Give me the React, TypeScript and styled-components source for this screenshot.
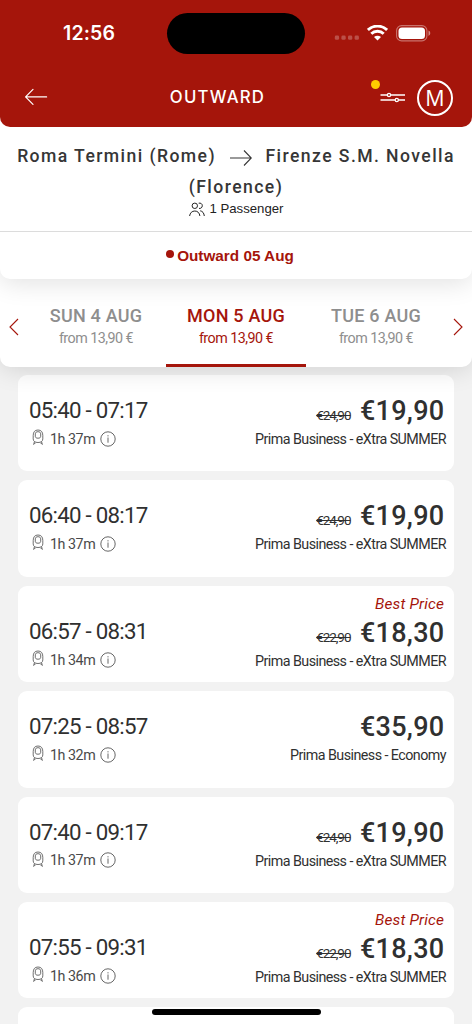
import React from 'react';
import styled, { createGlobalStyle } from 'styled-components';

const GlobalStyle = createGlobalStyle`
  *, *::before, *::after { box-sizing: border-box; }
  body { margin: 0; background: #f2f2f2; color: #303030; font-family: Roboto, sans-serif; }
  button { border: 0; background: none; padding: 0; margin: 0; color: inherit; font: inherit; }
  svg { display: block; flex: none; }
`;

const RED = '#a5150b';

const Screen = styled.main`
  width: 472px;
  height: 1024px;
  overflow: hidden;
  position: relative;
  background: #f2f2f2;
  display: flex;
  flex-direction: column;
`;

const Header = styled.header`
  position: relative;
  z-index: 4;
  flex: none;
  height: 279px;
  background: #fff;
  border-radius: 0 0 10px 10px;
  box-shadow: 0 4px 26px rgba(0, 0, 0, 0.12);
`;

const TopBar = styled.div`
  height: 126.5px;
  border-radius: 0 0 10px 10px;
  background: ${RED};
  color: #fff;
`;

const StatusBar = styled.div`
  height: 66px;
  display: grid;
  grid-template-columns: 167px 138px 1fr;
  align-items: center;
`;

const Clock = styled.span`
  padding-left: 63px;
  font: 600 19.5px/24px Inter, sans-serif;
  letter-spacing: 0.15px;
`;

const Island = styled.div`
  height: 41px;
  border-radius: 21px;
  background: #000;
`;

const StatusIcons = styled.div`
  display: flex;
  align-items: center;
  padding-left: 29px;
  gap: 8px;
`;

const Navigation = styled.nav`
  height: 60.5px;
  display: grid;
  grid-template-columns: 71px 1fr 109px;
  align-items: center;
`;

const BackButton = styled.button`
  padding: 1px 0 0 24px;
`;

const Title = styled.h1`
  margin: 0 19px 0 20px;
  padding-top: 1px;
  text-align: center;
  font: 500 16.8px/22px Inter, sans-serif;
  letter-spacing: 1.2px;
`;

const Actions = styled.div`
  display: flex;
  align-items: center;
  padding: 3px 0 0 17px;
  gap: 11px;
`;

const FilterButton = styled.button`
  position: relative;
`;

const FilterDot = styled.i`
  position: absolute;
  left: -9px;
  top: -2.5px;
  width: 9px;
  height: 9px;
  border-radius: 50%;
  background: #fc0;
`;

const Avatar = styled.button`
  width: 36px;
  height: 36px;
  border: 2px solid #fff;
  border-radius: 50%;
  font: 400 21.5px/32px "Open Sans", sans-serif;
  text-align: center;
`;

const Route = styled.div`
  height: 105.5px;
  border-bottom: 1px solid #dcdcdc;
  padding-top: 14px;
  display: flex;
  flex-direction: column;
  align-items: center;
`;

const Stations = styled.div`
  display: flex;
  align-items: center;
  height: 31px;
  white-space: pre;
  font: 500 17.6px/31px Roboto, sans-serif;
  letter-spacing: 1.42px;
  color: #363636;
`;

const StationArrow = styled.svg`
  margin: 3px 14px 0 13.5px;
`;

const Passengers = styled.div`
  height: 16px;
  margin-top: -1.5px;
  display: flex;
  align-items: center;
  gap: 4px;
  padding-left: 1px;
  color: #222;
  font: 400 13.2px/16px "Liberation Sans", sans-serif;
`;

const Direction = styled.div`
  height: 47px;
  display: flex;
  align-items: center;
  justify-content: center;
  gap: 3px;
  padding: 1px 12px 0 0;
  color: ${RED};
  font: 700 15.3px/20px "Liberation Sans", sans-serif;
`;

const DirectionDot = styled.i`
  width: 8px;
  height: 8px;
  margin-bottom: 5px;
  border-radius: 50%;
  background: ${RED};
`;

const DateBar = styled.div`
  position: relative;
  z-index: 2;
  flex: none;
  height: 99px;
  margin-top: -11px;
  padding-top: 12px;
  display: grid;
  grid-template-columns: 26px 140px 140px 140px 26px;
  background: #fff;
  border-radius: 0 0 10px 10px;
  box-shadow: 0 2px 26px rgba(0, 0, 0, 0.14);
`;

const DateArrow = styled.button<{ $right?: boolean }>`
  display: flex;
  align-items: center;
  justify-content: ${(p) => (p.$right ? 'flex-start' : 'flex-end')};
  padding: ${(p) => (p.$right ? '7px 0 0 7px' : '7px 7px 0 0')};
`;

const DateTab = styled.button<{ $active?: boolean }>`
  display: flex;
  flex-direction: column;
  align-items: center;
  padding-top: 25px;
  color: ${(p) => (p.$active ? RED : '#8e8e8e')};
  border-bottom: 3px solid ${(p) => (p.$active ? RED : 'transparent')};
`;

const DayName = styled.span`
  font: 500 18px/22px Roboto, sans-serif;
  letter-spacing: 0.22px;
`;

const DayPrice = styled.span`
  font: 400 14.3px/22px Roboto, sans-serif;
  letter-spacing: -0.52px;
`;

const TripList = styled.section`
  display: flex;
  flex-direction: column;
  gap: 9px;
  padding: 8px 18px 0;
`;

const TripCard = styled.article<{ $best: boolean }>`
  flex: none;
  height: 96.4px;
  display: flex;
  justify-content: space-between;
  background: #fff;
  border-radius: 9px;
  padding: ${(p) => (p.$best ? '8px' : '20px')} 8px 0 11px;
`;

const TripTiming = styled.div<{ $best: boolean }>`
  padding-top: ${(p) => (p.$best ? '22.5px' : '0')};
`;

const TripHours = styled.div`
  font: 400 22.3px/30px Roboto, sans-serif;
  letter-spacing: -0.75px;
`;

const Duration = styled.div`
  height: 27px;
  display: flex;
  align-items: center;
  padding-left: 2.5px;
  color: #4a4a4a;
  font: 400 14.3px/27px Roboto, sans-serif;
  letter-spacing: -0.48px;
`;

const DurationText = styled.span`
  margin: 1px 5px 0 6.5px;
`;

const Fare = styled.div`
  display: flex;
  flex-direction: column;
  align-items: flex-end;
`;

const BestPrice = styled.div`
  height: 20px;
  padding-right: 2px;
  color: ${RED};
  font: italic 400 15.4px/20px Roboto, sans-serif;
  letter-spacing: 0.15px;
`;

const PriceLine = styled.div<{ $best: boolean }>`
  height: 31px;
  display: flex;
  align-items: baseline;
  gap: 9.5px;
  padding: 1px 1.5px 0 0;
  margin-top: ${(p) => (p.$best ? '3px' : '0')};
`;

const OldPrice = styled.s`
  font: 400 13.5px/31px Roboto, sans-serif;
  letter-spacing: -1.05px;
`;

const Price = styled.strong`
  font: 500 27px/31px Roboto, sans-serif;
  letter-spacing: 0.3px;
`;

const FareName = styled.div`
  font: 400 14.3px/26px Roboto, sans-serif;
  letter-spacing: -0.55px;
  white-space: nowrap;
`;

const HomeIndicator = styled.div`
  position: absolute;
  z-index: 5;
  left: 152px;
  bottom: 9px;
  width: 169px;
  height: 6px;
  border-radius: 3px;
  background: #000;
`;

const Signals = () => (
  <svg width="25" height="20" viewBox="0 0 25 20" fill="#fff" opacity=".25">
    {[0.8, 7.4, 14, 20.6].map((x) => (
      <rect key={x} x={x} y="12.5" width="4.3" height="4.3" rx="1.4" />
    ))}
  </svg>
);

const Wifi = () => (
  <svg width="21" height="16" viewBox="0 0 21 16" fill="none" stroke="#fff" strokeWidth="2.9">
    <path d="M.9 5a13.8 13.8 0 0 1 19.2 0M4.3 8.8a8.9 8.9 0 0 1 12.4 0" />
    <path d="m10.5 15.6-3.5-3.5a4.9 4.9 0 0 1 7 0z" fill="#fff" stroke="none" />
  </svg>
);

const Battery = () => (
  <svg width="35" height="17" viewBox="0 0 35 17">
    <rect x=".6" y=".6" width="30.3" height="15.3" rx="5" fill="none" stroke="#fff" strokeOpacity=".4" strokeWidth="1.1" />
    <rect x="2.5" y="2.5" width="26.5" height="11.5" rx="3.5" fill="#fff" />
    <path d="M32.5 5.6c2.3 1 2.3 4.3 0 5.3z" fill="#fff" opacity=".5" />
  </svg>
);

const BackIcon = () => (
  <svg width="24" height="18" viewBox="0 0 24 18" fill="none" stroke="#fff" strokeWidth="1.2" strokeLinecap="round" strokeLinejoin="round">
    <path d="M9 1.4 1.6 8.9 9 16.4M1.6 8.9h21" />
  </svg>
);

const FilterIcon = () => (
  <svg width="26" height="30" viewBox="0 0 26 30" fill={RED} stroke="#fff" strokeWidth="1.3">
    <path d="M.5 12h24.5M.5 17h24.5" />
    <circle cx="9" cy="12" r="1.6" />
    <circle cx="16.8" cy="17" r="1.6" />
  </svg>
);

const PeopleIcon = () => (
  <svg width="16" height="15" viewBox="0 0 16 15" fill="none" stroke="#222" strokeWidth="1">
    <circle cx="5.8" cy="3.8" r="2.7" />
    <path d="M.6 14c.4-3.1 2.4-5 5.2-5s4.7 1.9 5.1 5M9.7 1.2c2-.5 3.6.7 3.6 2.5S11.7 6.8 10 6.4M11.2 8.8c2.4.3 3.8 2.3 4.1 5.2" />
  </svg>
);

const TrainGlyph = styled.svg`
  margin-bottom: 2px;
`;

const TrainIcon = () => (
  <TrainGlyph width="12" height="17" viewBox="0 0 12 17" fill="none" stroke="#555" strokeWidth=".85">
    <path d="M1.200 6.500C1.200 3 2.800 1 6 1s4.800 2 4.800 5.500v3.400c0 2.400-1.800 3.600-4.800 3.600s-4.800-1.200-4.800-3.600z" />
    <path d="M3.300 4.900c0-1.400 1-2.200 2.700-2.200s2.700.8 2.700 2.200v2.400c0 1.200-.8 1.900-2.700 1.900s-2.700-.7-2.700-1.900z" />
    <path d="m2.400 12.700-.8 3.100M9.600 12.700l.8 3.100M2 14.300h1.400M8.600 14.300H10" />
  </TrainGlyph>
);

const InfoIcon = () => (
  <svg width="16" height="16" viewBox="0 0 16 16" fill="none" stroke="#555" strokeWidth=".9">
    <circle cx="8" cy="8" r="7.2" />
    <path d="M8 6.500v5.200M8 4.200v1.200" />
  </svg>
);

interface Trip {
  hours: string;
  duration: string;
  price: string;
  old?: string;
  fare?: string;
  best?: boolean;
}

const trips: Trip[] = [
  { hours: '05:40 - 07:17', duration: '1h 37m', price: '€19,90', old: '€24,90' },
  { hours: '06:40 - 08:17', duration: '1h 37m', price: '€19,90', old: '€24,90' },
  { hours: '06:57 - 08:31', duration: '1h 34m', price: '€18,30', old: '€22,90', best: true },
  { hours: '07:25 - 08:57', duration: '1h 32m', price: '€35,90', fare: 'Prima Business - Economy' },
  { hours: '07:40 - 09:17', duration: '1h 37m', price: '€19,90', old: '€24,90' },
  { hours: '07:55 - 09:31', duration: '1h 36m', price: '€18,30', old: '€22,90', best: true },
];

const NextCard = styled.div`
  flex: none;
  height: 96.4px;
  border-radius: 9px;
  background: #fff;
`;

function TripItem({ trip }: { trip: Trip }) {
  const best = !!trip.best;
  return (
    <TripCard $best={best}>
      <TripTiming $best={best}>
        <TripHours>{trip.hours}</TripHours>
        <Duration>
          <TrainIcon />
          <DurationText>{trip.duration}</DurationText>
          <InfoIcon />
        </Duration>
      </TripTiming>
      <Fare>
        {best && <BestPrice>Best Price</BestPrice>}
        <PriceLine $best={best}>
          {trip.old && <OldPrice>{trip.old}</OldPrice>}
          <Price>{trip.price}</Price>
        </PriceLine>
        <FareName>{trip.fare ?? 'Prima Business - eXtra SUMMER'}</FareName>
      </Fare>
    </TripCard>
  );
}

const days = [
  { name: 'SUN 4 AUG' },
  { name: 'MON 5 AUG', active: true },
  { name: 'TUE 6 AUG' },
];

export default function App() {
  return (
    <Screen>
      <GlobalStyle />
      <Header>
        <TopBar>
          <StatusBar>
            <Clock>12:56</Clock>
            <Island />
            <StatusIcons>
              <Signals />
              <Wifi />
              <Battery />
            </StatusIcons>
          </StatusBar>
          <Navigation>
            <BackButton aria-label="Back"><BackIcon /></BackButton>
            <Title>OUTWARD</Title>
            <Actions>
              <FilterButton aria-label="Filters">
                <FilterIcon />
                <FilterDot />
              </FilterButton>
              <Avatar>M</Avatar>
            </Actions>
          </Navigation>
        </TopBar>
        <Route>
          <Stations>
            <span>Roma Termini (Rome)</span>
            <StationArrow width="22" height="18" viewBox="0 0 22 18" fill="none" stroke="#363636" strokeWidth="1.1">
              <path d="M0 9h21.3M14 1.5 21.3 9 14 16.5" />
            </StationArrow>
            <span>Firenze S.M. Novella</span>
          </Stations>
          <Stations>(Florence)</Stations>
          <Passengers><PeopleIcon />1 Passenger</Passengers>
        </Route>
        <Direction><DirectionDot />Outward 05 Aug</Direction>
      </Header>
      <DateBar>
        <DateArrow aria-label="Previous dates">
          <svg width="10" height="18" viewBox="0 0 10 18" fill="none" stroke={RED} strokeWidth="1.1"><path d="M9 1 1 9l8 8" /></svg>
        </DateArrow>
        {days.map((day) => (
          <DateTab key={day.name} $active={day.active}>
            <DayName>{day.name}</DayName>
            <DayPrice>from 13,90 €</DayPrice>
          </DateTab>
        ))}
        <DateArrow $right aria-label="Next dates">
          <svg width="10" height="18" viewBox="0 0 10 18" fill="none" stroke={RED} strokeWidth="1.1"><path d="m1 1 8 8-8 8" /></svg>
        </DateArrow>
      </DateBar>
      <TripList>
        {trips.map((trip) => <TripItem key={trip.hours} trip={trip} />)}
        <NextCard />
      </TripList>
      <HomeIndicator />
    </Screen>
  );
}
